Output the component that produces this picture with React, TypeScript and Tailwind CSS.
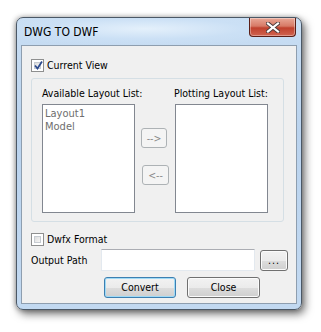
import React from "react";

const font = { fontFamily: '"DejaVu Sans Condensed", "DejaVu Sans", sans-serif', fontStretch: "condensed" };

const CheckBox = ({ checked }: { checked?: boolean }) => (
  <div className="relative h-[13px] w-[13px] shrink-0 border border-[#8e8f8f] bg-white">
    <div className="absolute inset-[2px] border border-[#c6cbd1] bg-[linear-gradient(135deg,#dcdcdc,#f6f6f6)]" />
    {checked && (
      <svg className="absolute left-[1px] top-[0px]" width="11" height="11" viewBox="0 0 11 11">
        <path d="M2 5.5 L4.5 8.5 L9 1.5" fill="none" stroke="#2c4a8d" strokeWidth="1.8" />
      </svg>
    )}
  </div>
);

const WinButton = ({
  label,
  className = "",
  disabled,
  primary,
}: {
  label: string;
  className?: string;
  disabled?: boolean;
  primary?: boolean;
}) => {
  if (disabled) {
    return (
      <div
        className={`flex items-center justify-center rounded-[3px] border border-[#adb2b5] bg-[#f4f4f4] text-[10.5px] text-[#8a8a8a] ${className}`}
      >
        {label}
      </div>
    );
  }
  return (
    <div
      className={`flex items-center justify-center rounded-[3px] border text-black ${
        primary
          ? "border-[#3c7fb1] shadow-[inset_0_0_0_1px_#9fdaf6]"
          : "border-[#707070] shadow-[inset_0_0_0_1px_#fbfbfb]"
      } bg-[linear-gradient(to_bottom,#f2f2f2_0%,#ebebeb_50%,#dddddd_51%,#cfcfcf_100%)] ${className}`}
    >
      {label}
    </div>
  );
};

export default function App() {
  return (
    <div className="h-[332px] w-[321px] bg-white pl-[16px] pt-[17px]" style={font}>
      {/* window frame */}
      <div className="flex h-[293px] w-[286px] flex-col rounded-[7px] border border-[#4b5866] bg-[linear-gradient(to_bottom,#c9def3,#bad3ee_40%,#c2d9f1)] shadow-[3px_4px_9px_rgba(0,0,0,0.55),-1px_0_5px_rgba(0,0,0,0.3)]">
        {/* title bar */}
        <div className="flex h-[27px] items-start justify-between rounded-t-[6px] bg-[radial-gradient(ellipse_at_45%_40%,#e4f0fb_0%,#cbe0f5_45%,transparent_75%)] pl-[7px] pr-[5px]">
          <div className="pt-[7px] text-[12px] leading-[14px] text-black">DWG TO DWF</div>
          <div className="flex h-[19px] w-[47px] items-center justify-center rounded-b-[4px] border border-t-0 border-[#5b1e16] bg-[linear-gradient(to_bottom,#e9a897_0%,#d77a66_45%,#c0412d_55%,#d06450_100%)] shadow-[inset_0_0_0_1px_rgba(255,255,255,0.35)]">
            <svg width="14" height="11" viewBox="0 0 14 11">
              <path d="M2 1.5 L12 9.5 M12 1.5 L2 9.5" stroke="#4a3b3b" strokeWidth="4" strokeLinecap="square" />
              <path d="M2 1.5 L12 9.5 M12 1.5 L2 9.5" stroke="#ffffff" strokeWidth="2.2" strokeLinecap="square" />
            </svg>
          </div>
        </div>

        {/* client area */}
        <div className="mx-[4px] h-[259px] border border-[#8e9eaf] bg-[#f0f0f0] text-[10.5px] leading-[13px] text-black">
          {/* current view */}
          <div className="ml-[9px] mt-[13px] flex items-center gap-[3px]">
            <CheckBox checked />
            <span>Current View</span>
          </div>

          {/* group box */}
          <div className="ml-[9px] mt-[6px] h-[144px] w-[253px] rounded-[3px] border border-[#d5dfe5] pl-[10px] pt-[7px]">
            <div className="flex items-start">
              <div className="flex w-[93px] flex-col">
                <div className="h-[14px] whitespace-nowrap leading-[14px]">Available Layout List:</div>
                <div className="mt-[4px] h-[109px] w-[93px] border border-[#828790] bg-white px-[2px] pt-[2px] text-[11px] text-[#6e6e6e]">
                  <div>Layout1</div>
                  <div>Model</div>
                </div>
              </div>
              <div className="ml-[6px] flex w-[28px] flex-col">
                <WinButton label="-->" disabled className="mt-[42px] h-[20px] w-[26px]" />
                <WinButton label="<--" disabled className="ml-[1px] mt-[17px] h-[20px] w-[27px]" />
              </div>
              <div className="ml-[5px] flex flex-col">
                <div className="h-[14px] whitespace-nowrap leading-[14px]">Plotting Layout List:</div>
                <div className="ml-[1px] mt-[4px] h-[109px] w-[93px] border border-[#828790] bg-white" />
              </div>
            </div>
          </div>

          {/* dwfx */}
          <div className="ml-[9px] mt-[11px] flex items-center gap-[3px]">
            <CheckBox />
            <span>Dwfx Format</span>
          </div>

          {/* output path */}
          <div className="ml-[9px] mt-[3px] flex items-center">
            <span className="w-[70px]">Output Path</span>
            <div className="h-[22px] w-[154px] border border-[#e3e9ef] border-t-[#abadb3] bg-white" />
            <WinButton label="..." className="ml-[5px] h-[21px] w-[28px] tracking-[1px] text-[#2c2c6c]" />
          </div>

          {/* actions */}
          <div className="ml-[82px] mt-[6px] flex gap-[11px]">
            <WinButton label="Convert" primary className="h-[21px] w-[72px]" />
            <WinButton label="Close" className="h-[21px] w-[73px]" />
          </div>
        </div>
      </div>
    </div>
  );
}
